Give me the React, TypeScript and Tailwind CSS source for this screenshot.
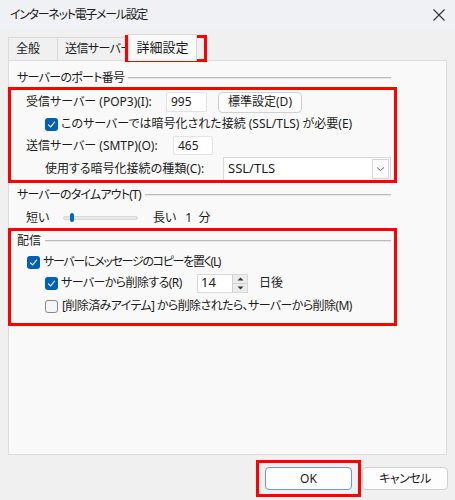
import React from "react";

const font = "font-['Noto_Sans','Noto_Sans_CJK_JP',sans-serif] [font-feature-settings:'palt']";

const Check = ({ checked }: { checked: boolean }) =>
  checked ? (
    <span className="flex h-[13px] w-[13px] shrink-0 items-center justify-center rounded-[3px] bg-[#005fb8]">
      <svg width="9" height="9" viewBox="0 0 9 9" fill="none">
        <path d="M1.5 4.8 L3.6 6.8 L7.6 2.2" stroke="white" strokeWidth="1.1" strokeLinecap="round" strokeLinejoin="round" />
      </svg>
    </span>
  ) : (
    <span className="h-[13px] w-[13px] shrink-0 rounded-[3px] border border-[#8a8a8a] bg-[#f6f6f6]" />
  );

const GroupHeader = ({ label, tight }: { label: string; tight?: string }) => (
  <div className="flex h-[16px] items-center pl-[8px] pr-[55px]">
    <span className={"shrink-0 " + (tight ?? "")}>{label}</span>
    <div className="ml-[4px] h-[2px] flex-1 border-t border-[#bdbdbd] border-b-[#ececec] bg-[#e6e6e6]" />
  </div>
);

const RedBox = ({ className }: { className: string }) => (
  <div className={"pointer-events-none absolute border-[3px] border-[#ff0000] " + className} />
);

export default function App() {
  return (
    <div className={"relative h-[500px] w-[455px] overflow-hidden bg-[#f0f0f0] text-[12px] text-[#1b1b1b] " + font}>
      {/* title bar */}
      <div className="flex h-[30px] items-center justify-between bg-[#eff1f4] pl-[10px] pr-[8px]">
        <span className="text-[12px] tracking-[-1.3px]">インターネット電子メール設定</span>
        <svg width="14" height="14" viewBox="0 0 14 14" className="mr-[1px]">
          <path d="M1.5 1.5 L12.5 12.5 M12.5 1.5 L1.5 12.5" stroke="#333" strokeWidth="1.1" />
        </svg>
      </div>

      {/* tabs */}
      <div className="mt-[4px] flex h-[26px] items-end pl-[8px]">
        <div className="flex h-[23px] w-[49px] items-center border-l border-t border-[#d9d9d9] pl-[7px]">全般</div>
        <div className="flex h-[23px] w-[71px] items-center whitespace-nowrap border-l border-t border-[#d9d9d9] pl-[7px] tracking-[-0.6px]">
          送信サーバー
        </div>
        <div className="relative z-10 -mb-px flex h-[27px] w-[69px] items-center justify-center border-l border-r border-t border-[#d9d9d9] bg-[#f9f9f9] text-[13px]">
          詳細設定
        </div>
      </div>

      {/* panel */}
      <div className="mx-[8px] h-[395px] border border-[#dcdcdc] bg-[#f9f9f9]">
        <div className="mt-[9px]">
          <GroupHeader label="サーバーのポート番号" tight="tracking-[-0.7px]" />
        </div>

        <div className="mt-[5px] flex h-[22px] items-center pl-[17px]">
          <span className="w-[140px] shrink-0">受信サーバー (POP3)(I):</span>
          <div className="flex h-[20px] w-[41px] items-center rounded-[2px] border border-[#e3e3e3] bg-white pl-[4px]">995</div>
          <button className="ml-[11px] flex h-[21px] w-[84px] items-center justify-center rounded-[4px] border border-[#d0d0d0] bg-[#fdfdfd]">
            標準設定(D)
          </button>
        </div>

        <div className="mt-[1px] flex h-[20px] items-center gap-[3px] pl-[36px]">
          <Check checked />
          <span>このサーバーでは暗号化された接続 (SSL/TLS) が必要(E)</span>
        </div>

        <div className="mt-[1px] flex h-[21px] items-center pl-[17px]">
          <span className="w-[147px] shrink-0">送信サーバー (SMTP)(O):</span>
          <div className="flex h-[19px] w-[40px] items-center rounded-[2px] border border-[#e3e3e3] bg-white pl-[4px]">465</div>
        </div>

        <div className="mt-[1px] flex h-[24px] items-center pl-[36px]">
          <span className="w-[178px] shrink-0">使用する暗号化接続の種類(C):</span>
          <div className="flex h-[24px] w-[168px] items-center justify-between border border-[#d9d9d9] bg-white pl-[4px] pr-[1px] text-[13px]">
            <span>SSL/TLS</span>
            <div className="flex h-[20px] w-[17px] items-center justify-center border border-[#d6d6d6] bg-[#fbfbfb]">
              <svg width="9" height="6" viewBox="0 0 9 6">
                <path d="M1 1.5 L4.5 4.5 L8 1.5" stroke="#555" strokeWidth="0.9" fill="none" />
              </svg>
            </div>
          </div>
        </div>

        <div className="mt-[6px]">
          <GroupHeader label="サーバーのタイムアウト(T)" tight="tracking-[-0.8px]" />
        </div>

        <div className="mt-[6px] flex h-[18px] items-center pl-[17px]">
          <span className="w-[37px] shrink-0">短い</span>
          <div className="relative h-[4px] w-[75px] rounded-[2px] border border-[#d8d8d8] bg-[#e8e8e8]">
            <div className="absolute left-[6px] top-[-4px] h-[9px] w-[4px] rounded-[2px] bg-[#0067c0]" />
          </div>
          <span className="ml-[15px]">長い</span>
          <span className="ml-[9px]">1&nbsp;&nbsp;分</span>
        </div>

        <div className="mt-[6px]">
          <GroupHeader label="配信" />
        </div>

        <div className="mt-[3px] flex h-[20px] items-center gap-[3px] pl-[18px]">
          <Check checked />
          <span className="tracking-[-1.3px]">サーバーにメッセージのコピーを置く(L)</span>
        </div>

        <div className="mt-[1px] flex h-[20px] items-center pl-[36px]">
          <Check checked />
          <span className="ml-[3px] w-[136px] shrink-0 tracking-[-0.6px]">サーバーから削除する(R)</span>
          <div className="flex h-[19px] w-[51px] items-stretch border border-[#d9d9d9] bg-white">
            <span className="flex flex-1 items-center pl-[3px] text-[13px]">14</span>
            <div className="flex w-[15px] flex-col border-l border-[#d0d0d0] bg-[#ececec]">
              <div className="flex flex-1 items-center justify-center border-b border-[#d0d0d0]">
                <svg width="7" height="4" viewBox="0 0 7 4"><path d="M0.5 3.5 L3.5 0.5 L6.5 3.5Z" fill="#333" /></svg>
              </div>
              <div className="flex flex-1 items-center justify-center">
                <svg width="7" height="4" viewBox="0 0 7 4"><path d="M0.5 0.5 L3.5 3.5 L6.5 0.5Z" fill="#333" /></svg>
              </div>
            </div>
          </div>
          <span className="ml-[11px]">日後</span>
        </div>

        <div className="mt-[3px] flex h-[20px] items-center gap-[4px] pl-[36px]">
          <Check checked={false} />
          <span className="tracking-[-0.6px]">[削除済みアイテム] から削除されたら、サーバーから削除(M)</span>
        </div>
      </div>

      {/* buttons */}
      <div className="mt-[12px] flex justify-end gap-[10px] pr-[7px]">
        <button className="flex h-[23px] w-[87px] items-center justify-center rounded-[4px] border border-[#6b9bd1] bg-[#fdfdfd]">OK</button>
        <button className="flex h-[23px] w-[86px] items-center justify-center rounded-[4px] border border-[#d0d0d0] bg-[#fdfdfd] tracking-[-0.5px]">キャンセル</button>
      </div>

      {/* annotation boxes */}
      <RedBox className="left-[125px] top-[35px] h-[27px] w-[82px]" />
      <RedBox className="left-[8px] top-[87px] h-[96px] w-[389px]" />
      <RedBox className="left-[8px] top-[228px] h-[98px] w-[389px]" />
      <RedBox className="left-[256px] top-[460px] h-[37px] w-[105px]" />
    </div>
  );
}
